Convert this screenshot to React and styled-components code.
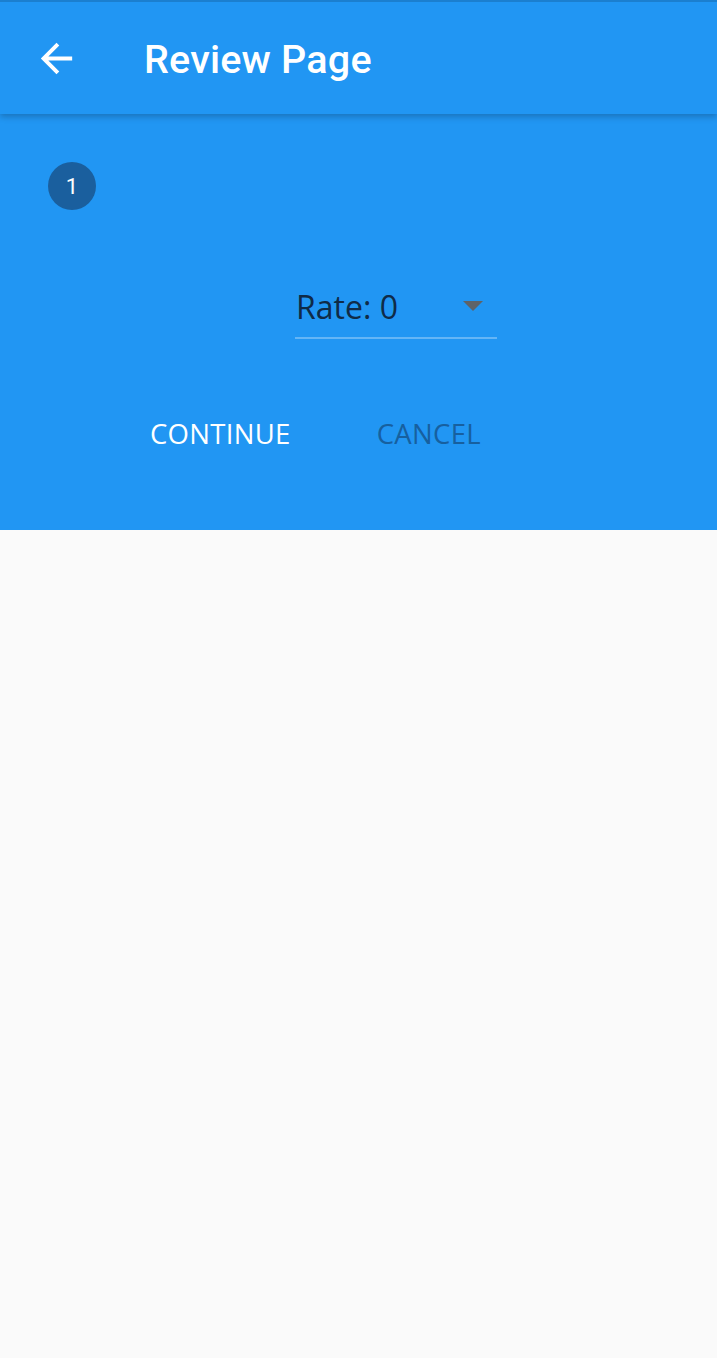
import React from "react";
import styled, { createGlobalStyle } from "styled-components";

const GlobalStyle = createGlobalStyle`
  html, body {
    margin: 0;
    padding: 0;
    background: #fafafa;
  }
  body {
    font-family: Roboto, "Noto Sans", sans-serif;
  }
`;

const Page = styled.div`
  width: 717px;
  min-height: 1358px;
  background: #fafafa;
`;

const AppBar = styled.header`
  position: relative;
  z-index: 1;
  height: 112px;
  border-top: 2px solid #1b7fcf;
  background: #2196f3;
  display: flex;
  align-items: center;
  box-shadow: 0 3px 6px rgba(0, 0, 0, 0.22);
`;

const BackButton = styled.button`
  width: 48px;
  height: 48px;
  margin-left: 32px;
  padding: 0;
  border: none;
  background: none;
  display: flex;
  align-items: center;
  justify-content: center;
  cursor: pointer;
`;

const Title = styled.h1`
  margin: 2px 0 0 64px;
  color: #fff;
  font-family: Roboto, sans-serif;
  font-weight: 500;
  font-size: 39.5px;
  letter-spacing: 0.2px;
`;

const Body = styled.main`
  background: #2196f3;
  height: 416px;
  padding-top: 48px;
  box-sizing: border-box;
`;

const StepHeader = styled.div`
  display: flex;
  align-items: center;
  padding-left: 48px;
`;

const StepCircle = styled.div`
  width: 48px;
  height: 48px;
  border-radius: 50%;
  background: #1a5f9e;
  color: #fff;
  display: flex;
  align-items: center;
  justify-content: center;
  font-family: Roboto, sans-serif;
  font-size: 22px;
`;

const StepContent = styled.div`
  margin: 71px 53px 0 128px;
  display: flex;
  flex-direction: column;
`;

const Dropdown = styled.div`
  align-self: center;
  width: 202px;
  height: 58px;
  box-sizing: border-box;
  border-bottom: 2px solid rgba(255, 255, 255, 0.3);
  display: flex;
  align-items: center;
  justify-content: space-between;
  padding: 0 14px 6px 1px;
`;

const DropdownValue = styled.span`
  color: #0f2b47;
  font-family: "Open Sans", sans-serif;
  font-size: 32px;
`;

const Caret = styled.span`
  width: 0;
  height: 0;
  border-left: 10px solid transparent;
  border-right: 10px solid transparent;
  border-top: 10px solid #5f6368;
`;

const Controls = styled.div`
  display: flex;
  margin-top: 66px;
  gap: 42px;
`;

const TextButton = styled.button`
  border: none;
  background: none;
  padding: 0 22px;
  height: 56px;
  color: ${props => (props.muted ? "#17609f" : "#fff")};
  font-family: "Open Sans", sans-serif;
  font-size: 27.5px;
  letter-spacing: 0.3px;
  cursor: pointer;
`;

const ArrowBack = () => (
  <svg width="47" height="47" viewBox="0 0 24 24" fill="#fff">
    <path d="M20 11H7.83l5.59-5.59L12 4l-8 8 8 8 1.41-1.41L7.83 13H20v-2z" />
  </svg>
);

const App = () => {
  return (
    <Page>
      <GlobalStyle />
      <AppBar>
        <BackButton aria-label="Back">
          <ArrowBack />
        </BackButton>
        <Title>Review Page</Title>
      </AppBar>
      <Body>
        <StepHeader>
          <StepCircle>1</StepCircle>
        </StepHeader>
        <StepContent>
          <Dropdown>
            <DropdownValue>Rate: 0</DropdownValue>
            <Caret />
          </Dropdown>
          <Controls>
            <TextButton>CONTINUE</TextButton>
            <TextButton muted>CANCEL</TextButton>
          </Controls>
        </StepContent>
      </Body>
    </Page>
  );
};

export default App;
